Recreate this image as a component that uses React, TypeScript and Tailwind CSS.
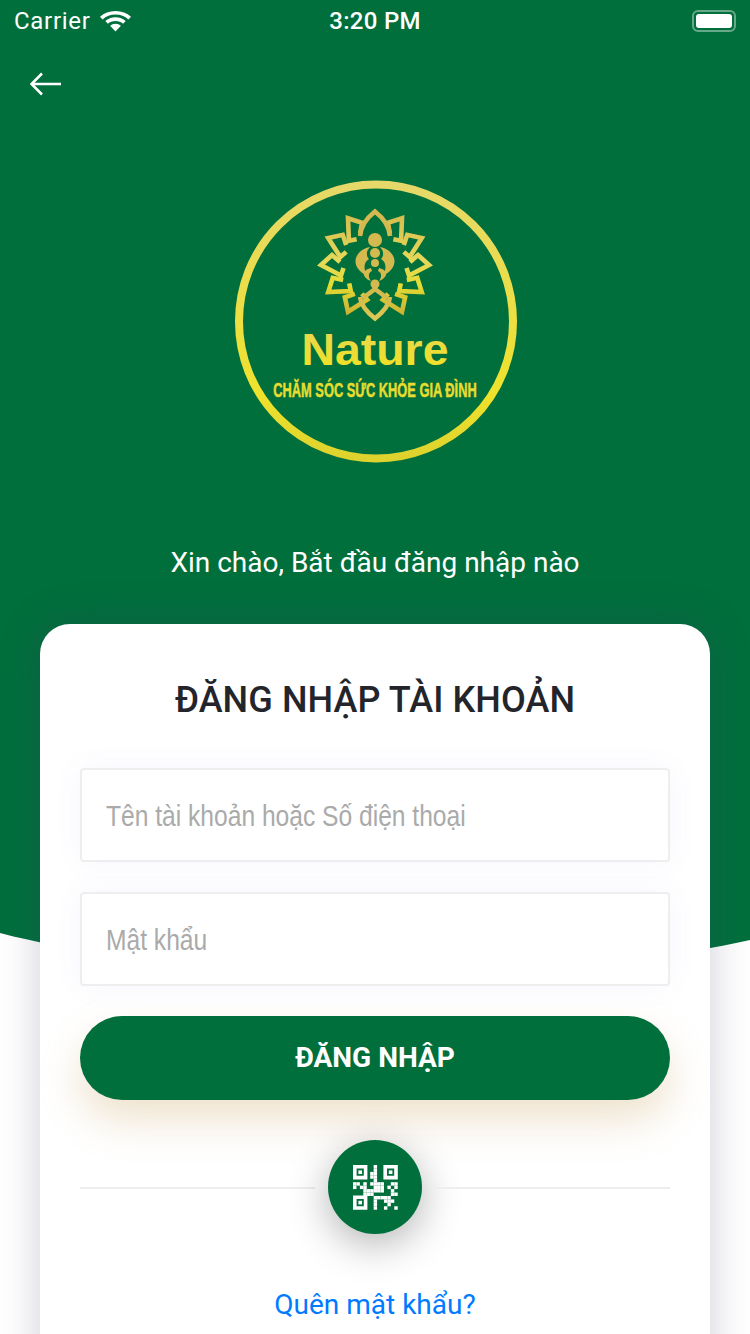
const roboto = "font-['Roboto',sans-serif]";

function rotate(x: number, y: number, deg: number, cx: number, cy: number) {
  const a = (deg * Math.PI) / 180;
  const rx = x * Math.cos(a) - y * Math.sin(a) + cx;
  const ry = x * Math.sin(a) + y * Math.cos(a) + cy;
  return `${rx.toFixed(2)} ${ry.toFixed(2)}`;
}

function petalPath(deg: number, cx: number, cy: number) {
  // left side petals are the mirror of the right side ones
  const side = deg > 180 ? -1 : 1;
  const pts: [number, number][] = [[-3, -35], [-10, -43], [0, -54], [10.5, -34], [3, -31.5]];
  return "M" + pts.map(([x, y]) => rotate(x * side, y, deg, cx, cy)).join("L");
}

function Logo() {
  const cx = 142;
  const cy = 85;
  const petals = [30, 60, 90, 120, 150, 210, 240, 270, 300, 330];
  return (
    <svg width="284" height="284" viewBox="0 0 284 284" className="block">
      <defs>
        <linearGradient id="ring" x1="0" y1="0" x2="0" y2="284" gradientUnits="userSpaceOnUse">
          <stop offset="0" stopColor="#e6d86a" />
          <stop offset="0.75" stopColor="#efe22c" />
          <stop offset="1" stopColor="#dcd12e" />
        </linearGradient>
        <linearGradient id="flower" x1="0" y1="30" x2="0" y2="145" gradientUnits="userSpaceOnUse">
          <stop offset="0" stopColor="#d4b94f" />
          <stop offset="0.45" stopColor="#e6d95a" />
          <stop offset="0.65" stopColor="#e3dc32" />
          <stop offset="1" stopColor="#c4a134" />
        </linearGradient>
        <linearGradient id="word" x1="0" y1="135" x2="0" y2="185" gradientUnits="userSpaceOnUse">
          <stop offset="0" stopColor="#e6d45e" />
          <stop offset="1" stopColor="#eee02a" />
        </linearGradient>
      </defs>
      <circle cx="143" cy="141.5" r="137" fill="none" stroke="url(#ring)" strokeWidth="8" />
      {petals.map((deg) => (
        <path key={deg} d={petalPath(deg, cx, cy)} fill="none" stroke="url(#flower)" strokeWidth="4.6" strokeLinejoin="miter" />
      ))}
      <g fill="none" stroke="url(#flower)" strokeWidth="4.6" transform={`translate(${cx} ${cy})`}>
        <path d="M-15-29C-14-40-7-48 0-53.5C7-48 14-40 15-29" />
        <path d="M-15 32C-14 41-7 48 0 53.5C7 48 14 41 15 32" />
        <path d="M-12 33L0 24L12 33" />
      </g>
      <g fill="url(#flower)" transform={`translate(${cx} ${cy})`}>
        <circle cx="0" cy="-25" r="7" />
        <circle cx="0" cy="-12" r="5" />
        <circle cx="0" cy="-2" r="4" />
        <circle cx="0" cy="19" r="4.5" />
        <path d="M-5-18C-20-15-27 1-8 11C-12 3-11-3-6-6C-9-9-9-14-5-18Z" />
        <path d="M5-18C20-15 27 1 8 11C12 3 11-3 6-6C9-9 9-14 5-18Z" />
        <path d="M-4 3C-13 5-14 12-4 16C-7 12-7 8-3 6Z" />
        <path d="M4 3C13 5 14 12 4 16C7 12 7 8 3 6Z" />
      </g>
      <text x="142" y="185" textAnchor="middle" textLength="147" lengthAdjust="spacingAndGlyphs" fill="url(#word)" className="font-['Liberation_Sans',sans-serif]" fontWeight="700" fontSize="44">
        Nature
      </text>
      <text transform="translate(142 216.5) scale(0.642 1)" textAnchor="middle" fill="#e8dc2e" stroke="#e8dc2e" strokeWidth="0.5" className="font-['Liberation_Sans',sans-serif]" fontWeight="700" fontSize="20">
        CHĂM SÓC SỨC KHỎE GIA ĐÌNH
      </text>
    </svg>
  );
}

const qrCells: [number, number[]][] = [
  [0, [6]],
  [1, [6]],
  [2, [5, 6]],
  [3, [5, 6]],
  [4, [6]],
  [5, [0, 1, 3, 5, 6, 7, 8, 11, 12]],
  [6, [0, 2, 3, 6, 7, 8, 10, 12]],
  [7, [3, 4, 5, 6, 7, 8, 11]],
  [8, [3, 4, 5, 11, 12]],
  [9, [6, 7, 8, 9, 10]],
  [10, [6, 9, 10, 11]],
  [11, [6, 10]],
  [12, [6, 9, 12]],
];

function Finder({ x, y }: { x: number; y: number }) {
  return (
    <g>
      <path fillRule="evenodd" d={`M${x} ${y}h14.4v14.4h-14.4zM${x + 3.6} ${y + 3.6}v7.2h7.2v-7.2z`} />
      <rect x={x + 5.4} y={y + 5.4} width="3.6" height="3.6" />
    </g>
  );
}

function QrIcon() {
  const s = 3.44;
  return (
    <svg width="45" height="45" viewBox="0 0 45 45" fill="#fff">
      <Finder x={0} y={0} />
      <Finder x={30.4} y={0} />
      <Finder x={0} y={30.4} />
      {qrCells.map(([row, cols]) =>
        cols.map((col) => (
          <rect key={`${row}-${col}`} x={col * s} y={row * s} width={s} height={s} />
        )),
      )}
    </svg>
  );
}

function StatusBar() {
  return (
    <div className={`flex h-[40px] items-center justify-between px-[14px] pt-[2px] text-white ${roboto}`}>
      <div className="flex w-[200px] items-center gap-[8px]">
        <span className="text-[24px] leading-none tracking-[0.7px]">Carrier</span>
        <svg width="33" height="22" viewBox="0 0 33 24" preserveAspectRatio="none" fill="#fff">
          <path d="M16.5 1C10.5 1 5 3.4 1 7.3l2.6 3C7 7 11.5 5 16.5 5s9.5 2 12.9 5.3l2.6-3C28 3.4 22.5 1 16.5 1z" />
          <path d="M16.5 8c-4 0-7.6 1.6-10.2 4.1l2.6 3c1.9-1.9 4.6-3 7.6-3s5.7 1.1 7.6 3l2.6-3C24.1 9.6 20.5 8 16.5 8z" />
          <path d="M16.5 15c-2.1 0-4 .8-5.4 2.2l5.4 6.3 5.4-6.3C20.5 15.8 18.6 15 16.5 15z" />
        </svg>
      </div>
      <span className="text-[24px] font-medium leading-none tracking-[0.3px]">3:20 PM</span>
      <div className="flex w-[200px] items-center justify-end">
        <div className="h-[22px] w-[44px] rounded-[6px] border-2 border-white/40 p-[2px]">
          <div className="h-full w-full rounded-[3px] bg-white" />
        </div>
      </div>
    </div>
  );
}

function Field({ label }: { label: string }) {
  return (
    <div className="flex h-[94px] items-center rounded-[4px] border-2 border-[#eeeeee] bg-white pl-[24px] shadow-[0_0_30px_rgba(110,110,230,0.06)]">
      <span className="inline-block origin-left scale-x-[0.82] whitespace-nowrap font-['Liberation_Sans',sans-serif] text-[30px] text-[#aaaaaa]">{label}</span>
    </div>
  );
}

export default function App() {
  return (
    <div className="relative h-[1334px] w-[750px] overflow-hidden bg-white">
      <svg width="750" height="1000" viewBox="0 0 750 1000" className="absolute left-0 top-0">
        <path d="M0 0H750V940C550 985 200 985 0 933Z" fill="#006f3c" />
      </svg>

      <div className="relative flex flex-col">
        <StatusBar />
        <div className="flex h-[88px] items-center pl-[30px]">
          <svg width="31" height="24" viewBox="0 0 31 24" fill="none" stroke="#fff" strokeWidth="2.5">
            <path d="M31 12H2M12 1.5L1.5 12 12 22.5" />
          </svg>
        </div>
        <div className="mt-[52px] flex justify-center">
          <Logo />
        </div>
        <p className={`mt-[80px] text-center text-[28px] leading-[38px] text-white ${roboto}`}>Xin chào, Bắt đầu đăng nhập nào</p>

        <div className={`mx-[40px] mt-[42px] h-[800px] rounded-[30px] bg-white px-[40px] pt-[51px] shadow-[0_0_40px_rgba(60,60,100,0.25)] ${roboto}`}>
          <h1 className="text-center text-[36px] font-medium leading-[50px] tracking-[0.1px] text-[#23252b]">ĐĂNG NHẬP TÀI KHOẢN</h1>
          <div className="mt-[43px] flex flex-col gap-[30px]">
            <Field label="Tên tài khoản hoặc Số điện thoại" />
            <Field label="Mật khẩu" />
          </div>
          <button className="mt-[30px] flex h-[84px] w-full items-center justify-center rounded-[42px] bg-[#006f3c] text-[28px] font-bold text-white shadow-[0_20px_40px_rgba(200,160,90,0.3)]">
            ĐĂNG NHẬP
          </button>
          <div className="mt-[40px] flex items-center gap-[13px]">
            <div className="mt-[2px] h-[2px] flex-1 bg-[#eeeeee]" />
            <div className="flex h-[94px] w-[94px] items-center justify-center rounded-full bg-[#006f3c] shadow-[0_10px_40px_rgba(0,0,0,0.3)]">
              <QrIcon />
            </div>
            <div className="mt-[2px] h-[2px] flex-1 bg-[#eeeeee]" />
          </div>
          <p className="mt-[51px] text-center text-[28px] leading-[40px] text-[#007aff]">Quên mật khẩu?</p>
        </div>
      </div>
    </div>
  );
}
